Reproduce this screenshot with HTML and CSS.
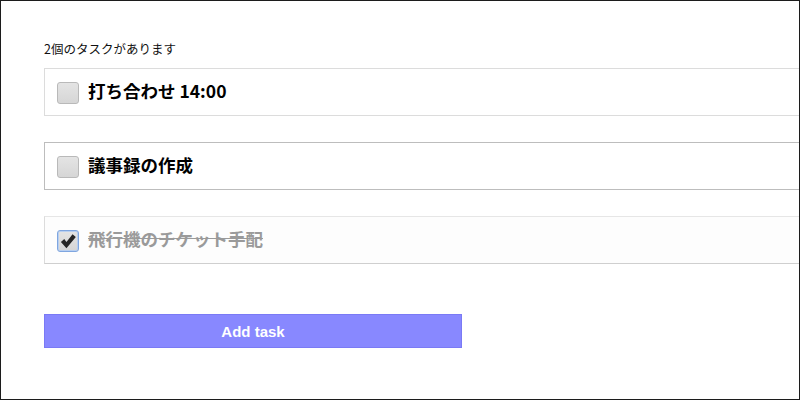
FILE: index.html
```html
<!DOCTYPE html>
<html lang="ja">
<head>
<meta charset="utf-8">
<title>Tasks</title>
<link rel="stylesheet" href="styles.css">
</head>
<body>
<div class="frame">
  <div class="count">2個のタスクがあります</div>
  <ul class="tasks">
    <li class="task task-a">
      <span class="box"></span>
      <span class="title">打ち合わせ 14:00</span>
    </li>
    <li class="task task-b">
      <span class="box"></span>
      <span class="title">議事録の作成</span>
    </li>
    <li class="task task-c done">
      <span class="box checked">
        <svg viewBox="0 0 22 22" width="22" height="22"><path d="M3.2 12 L6.9 8.8 L9.3 12.1 L16 3.6 L19.6 6.6 L9.3 19 Z" fill="#262626"/></svg>
      </span>
      <span class="title">飛行機のチケット手配</span>
    </li>
  </ul>
  <button class="add">Add task</button>
</div>
</body>
</html>
```
FILE: styles.css
```css
html, body {
  margin: 0;
  padding: 0;
  background: #fff;
}
.frame {
  width: 800px;
  height: 400px;
  box-sizing: border-box;
  border: 1px solid #1c1c1c;
  overflow: hidden;
  padding: 36px 0 0 43px;
  font-family: "Noto Sans CJK JP", "Noto Sans", sans-serif;
  color: #111;
}
.count {
  font-size: 12.5px;
  line-height: 24px;
  margin-bottom: 7px;
}
.tasks {
  list-style: none;
  margin: 0;
  padding: 0;
  width: 800px;
}
.task {
  height: 48px;
  box-sizing: border-box;
  border: 1px solid #dcdcdc;
  border-right: none;
  margin-bottom: 26px;
  display: flex;
  align-items: center;
  padding-left: 12px;
  gap: 9px;
}
.task:last-child {
  margin-bottom: 0;
}
.task-b {
  border-color: #bdbdbd;
}
.task-c {
  border-top-color: #e6e6e6;
  border-bottom-color: #cfcfcf;
  background: #fdfdfd;
}
.box {
  width: 22px;
  height: 22px;
  box-sizing: border-box;
  border: 1px solid #b9b9b9;
  border-radius: 3px;
  background: linear-gradient(#e4e4e4, #d6d6d6);
  display: flex;
  align-items: center;
  justify-content: center;
  margin-top: 1px;
}
.box.checked {
  border-color: #7fa6e0;
  box-shadow: inset 0 0 0 1px #b8cff0;
}
.box svg {
  display: block;
}
.title {
  font-size: 17.5px;
  font-weight: bold;
  line-height: 24px;
  margin-top: -2px;
  color: #000;
}
.done .title {
  color: #9a9a9a;
  text-decoration: line-through;
}
.add {
  display: block;
  margin: 50px 0 0 0;
  width: 418px;
  height: 34px;
  background: #8888ff;
  border: 1px solid #7a7af5;
  color: #fff;
  font-family: "Liberation Sans", Arial, sans-serif;
  font-weight: bold;
  font-size: 15px;
  padding: 0;
}
```
